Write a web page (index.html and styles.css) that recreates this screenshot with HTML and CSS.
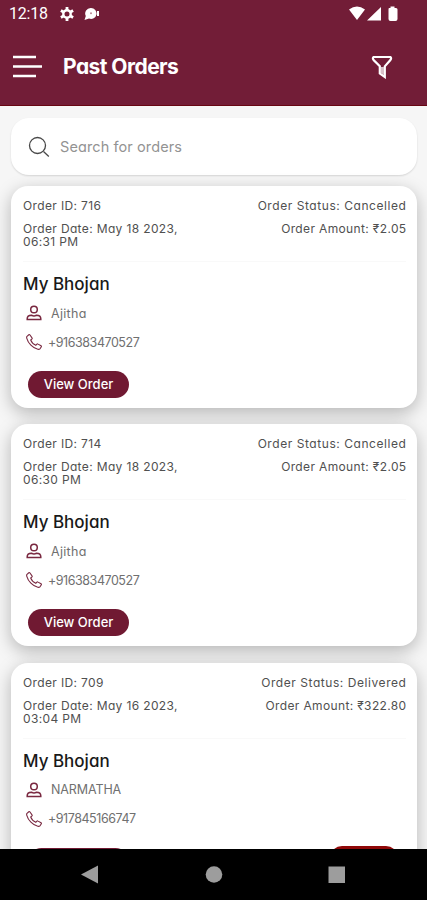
FILE: index.html
```
<!DOCTYPE html>
<html lang="en">
<head>
<meta charset="utf-8">
<title>Past Orders</title>
<link rel="stylesheet" href="styles.css">
</head>
<body>
<svg class="defs" aria-hidden="true">
  <symbol id="person" viewBox="0 0 16 16"><circle cx="8" cy="4.500" r="3.300"/><path d="M1.200 14.400v-.6c0-2.400 1.900-3.500 4.300-3.500q2.500 1.200 5 0c2.400 0 4.300 1.100 4.300 3.500v.6z"/></symbol>
  <symbol id="phone" viewBox="0 0 16 16"><path d="M1 2.300 2.800.8c.4-.3.9-.2 1.200.2l2 2.900c.3.400.2.900-.2 1.200l-1.100.9c.7 2 2.800 4.300 5.100 5.300l1.100-1.100c.3-.3.800-.4 1.200-.1l2.900 1.700c.4.300.5.800.2 1.200l-1.300 1.800c-.5.600-1.300.7-2.100.5C6.600 14.100 2.200 9.300.8 4.300.6 3.600.5 2.800 1 2.300z"/></symbol>
</svg>
<div class="screen">
  <header class="appbar">
    <div class="status">
      <span class="clock">12:18</span>
      <svg class="gear" viewBox="0 0 14 14"><circle cx="7" cy="7" r="3.700"/><path d="M7 0v3M7 11v3M.9 3.500l2.600 1.500M10.500 9l2.600 1.500M.9 10.500 3.500 9M10.500 5l2.600-1.500"/></svg>
      <svg class="chat" viewBox="0 0 16 14"><path d="M7 1a5.500 5.500 0 1 1-2 10.600L.5 13l1.300-4A5.500 5.500 0 0 1 7 1zM13 4h2v5h-2z"/><circle cx="7" cy="6.300" r="1"/></svg>
      <svg class="signals" viewBox="0 0 50 16"><path d="M0 3.500Q8-2.500 16 3.500L8 14zM18 14.500 32 1v13.500zM40 2h1.500V.5h4V2H47q1.500 0 1.500 1.500V13q0 2-2 2h-5q-2 0-2-2V3.500Q39.500 2 40 2z"/></svg>
    </div>
    <div class="toolbar">
      <svg class="menu" viewBox="0 0 29 24"><path d="M0 2h23M0 11.500h29M0 21h23"/></svg>
      <h1>Past Orders</h1>
      <svg class="filter" viewBox="0 0 22 24"><path d="M2.500 2h17q1.200 1-.1 3l-5.600 6.300V22l-5-3.500v-7.200L2.600 5q-1.300-2-.1-3z"/><path class="fill" d="M10 12h3v8l-3-2z"/></svg>
    </div>
  </header>
  <main>
    <div class="search">
      <svg viewBox="0 0 22 22"><circle cx="9.500" cy="9.500" r="8"/><path d="m15.500 15.500 5.300 5"/></svg>
      <span>Search for orders</span>
    </div>
    <article class="card">
      <div class="summary">
        <div><p class="id">Order ID: 716</p><p class="date">Order Date: May 18 2023,<br>06:31 PM</p></div>
        <div class="right"><p class="id">Order Status: Cancelled</p><p class="date">Order Amount: ₹2.05</p></div>
      </div>
      <h2>My Bhojan</h2>
      <div class="line name"><svg><use href="#person"/></svg><span>Ajitha</span></div>
      <div class="line tel"><svg><use href="#phone"/></svg><span>+916383470527</span></div>
      <div class="actions"><span class="view">View Order</span></div>
    </article>
    <article class="card">
      <div class="summary">
        <div><p class="id">Order ID: 714</p><p class="date">Order Date: May 18 2023,<br>06:30 PM</p></div>
        <div class="right"><p class="id">Order Status: Cancelled</p><p class="date">Order Amount: ₹2.05</p></div>
      </div>
      <h2>My Bhojan</h2>
      <div class="line name"><svg><use href="#person"/></svg><span>Ajitha</span></div>
      <div class="line tel"><svg><use href="#phone"/></svg><span>+916383470527</span></div>
      <div class="actions"><span class="view">View Order</span></div>
    </article>
    <article class="card">
      <div class="summary">
        <div><p class="id">Order ID: 709</p><p class="date">Order Date: May 16 2023,<br>03:04 PM</p></div>
        <div class="right"><p class="id">Order Status: Delivered</p><p class="date">Order Amount: ₹322.80</p></div>
      </div>
      <h2>My Bhojan</h2>
      <div class="line name"><svg><use href="#person"/></svg><span class="caps">NARMATHA</span></div>
      <div class="line tel"><svg><use href="#phone"/></svg><span>+917845166747</span></div>
      <div class="actions"><span class="view"></span><span class="red"></span></div>
    </article>
  </main>
  <nav>
    <svg viewBox="0 0 427 51"><path d="M81 25.500 98 16.500v18z"/><circle cx="214" cy="25.500" r="8.300"/><path d="M328.500 17.500h16.500v16.500h-16.500z"/></svg>
  </nav>
</div>
</body>
</html>
```

FILE: styles.css
```
* { box-sizing: border-box; }
body {
  margin: 0;
  font-family: Inter, "Noto Sans", sans-serif;
  font-feature-settings: "cv11";
  color: #505050;
}
h1, h2, p { margin: 0; }
.defs { position: absolute; width: 0; height: 0; }
.screen {
  display: flex;
  flex-direction: column;
  width: 427px;
  height: 900px;
  overflow: hidden;
}
.appbar { height: 106px; flex: none; background: #721d37; border-bottom: 1px solid #680612; color: #fff; }
.status { display: flex; align-items: center; height: 28px; padding: 0 28px 0 9px; }
.clock { width: 51px; font: 16px/28px Roboto, sans-serif; letter-spacing: -.2px; }
.gear { width: 14px; height: 14px; fill: none; stroke: #fff; stroke-width: 2.8; }
.gear circle { stroke-width: 2.4; }
.chat { width: 16px; height: 14px; margin-left: 10px; fill: #fff; }
.chat circle { fill: #b98794; }
.signals { width: 50px; height: 16px; margin-left: auto; fill: #fff; }
.toolbar { display: flex; align-items: center; height: 77px; padding: 0 34px 0 13px; }
.menu { width: 29px; height: 24px; fill: none; stroke: #fff; stroke-width: 2.6; }
h1 { margin-left: 21px; font-size: 21px; font-weight: 700; letter-spacing: -.55px; }
.filter { width: 22px; height: 24px; margin-left: auto; fill: none; stroke: #fff; stroke-width: 2.2; }
.filter .fill { fill: #d8c2c9; stroke: none; }
main { flex: 1; min-height: 0; overflow: hidden; padding: 12px 10px 0 11px; background: #f6f6f6; }
.search {
  display: flex;
  align-items: center;
  gap: 10px;
  height: 57px;
  margin-bottom: 11px;
  padding: 0 17px;
  border-radius: 18px;
  background: #fff;
  box-shadow: 0 1px 2px #0002;
  font-size: 14.500px;
  letter-spacing: .1px;
  color: #939393;
}
.search svg { width: 22px; height: 22px; fill: none; stroke: #484848; stroke-width: 1.3; }
.card {
  height: 222px;
  margin-bottom: 16.300px;
  padding: 0 11px 0 12px;
  border-radius: 17px;
  background: #fff;
  box-shadow: 0 5px 17px #0004;
}
.summary { display: flex; justify-content: space-between; height: 76px; border-bottom: 1px solid #f9f9f9; font-size: 12px; letter-spacing: .36px; }
.right { text-align: right; }
.right .id { letter-spacing: .56px; }
.right p { margin-right: -.5px; }
.id { padding-top: 12px; line-height: 16px; }
.date { padding-top: 8px; line-height: 13px; }
h2 { height: 43px; font-size: 17px; font-weight: 500; line-height: 44px; color: #191919; }
.line { display: flex; align-items: center; font-size: 12.500px; color: #707070; }
.line svg { width: 16px; height: 16px; flex: none; fill: none; stroke: #792840; stroke-width: 1.5; }
.name { height: 16px; margin-bottom: 13px; padding-left: 3px; gap: 9px; letter-spacing: .3px; }
.caps { letter-spacing: -.1px; }
.tel { height: 16px; padding-left: 3px; gap: 6px; letter-spacing: -.45px; }
.tel svg { stroke-width: 1.1; }
.actions { display: flex; justify-content: space-between; padding: 21px 8px 0 5px; }
.view {
  width: 101px;
  height: 27px;
  border-radius: 14px;
  background: #701932;
  color: #fff;
  font-size: 13px;
  font-weight: 500;
  line-height: 27px;
  text-align: center;
}
.red { width: 68px; height: 27px; margin-top: -2px; border-radius: 12px; background: #8f0808; }
nav { flex: none; height: 51px; background: #000; }
nav svg { display: block; width: 427px; height: 51px; fill: #9d9d9d; }
```
